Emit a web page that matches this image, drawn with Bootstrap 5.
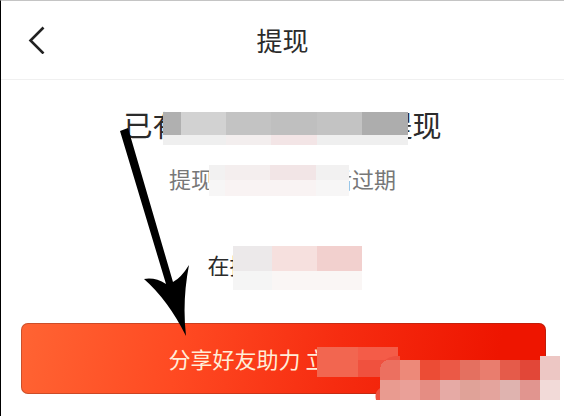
<!DOCTYPE html>
<html lang="zh-CN">
<head>
<meta charset="utf-8">
<meta name="viewport" content="width=device-width, initial-scale=1">
<title>提现</title>
<link href="https://cdn.jsdelivr.net/npm/bootstrap@5.3.0/dist/css/bootstrap.min.css" rel="stylesheet">
<style>
body { font-family: "Noto Sans CJK SC", sans-serif; color: #2b2b2b; background: #fff; }
.screen { border-left: 1px solid #000; border-top: 1px solid #c4c4c4; min-height: 100vh; overflow: hidden; }
.topbar { height: 79px; border-bottom: 1px solid #f0f0f0; padding: 0 26px; }
.side { width: 22px; }
.title { font-size: 26px; line-height: 32px; font-weight: 400; }
.line { display: flex; justify-content: center; white-space: nowrap; }
.line svg { position: relative; flex: none; }
.headline { font-size: 29px; line-height: 34px; font-weight: 400; margin-top: 27px; }
.headline svg { margin: 5px -24px 0 -19px; }
.expiry { font-size: 22px; line-height: 32px; color: #777; margin-top: 17px; }
.expiry svg { margin: 3px -19px 0 -4px; }
.waiting { font-size: 22px; line-height: 36px; margin-top: 50px; padding-left: 4px; }
.waiting svg { margin-left: -19px; }
.action { margin: 33px 18px 0 20px; }
.share { --bs-btn-border-width: 0; height: 71px; border-radius: 7px; font-size: 22px; line-height: 32px; color: #ffedd9;
  background: linear-gradient(100deg, #ff6433, #ff4a22 30%, #f62c10 60%, #ee1500 90%);
  box-shadow: inset 0 0 0 1px rgba(110, 45, 30, .35); }
.share:hover { color: #ffedd9; background: linear-gradient(100deg, #ff6433, #ee1500); }
.share span { padding-bottom: 2px; }
.share svg { margin: 6px 0 0 -10px; }
.censor { right: -14px; bottom: -6px; }
.pointer { left: 119px; top: 125px; }
</style>
<script src="https://cdn.jsdelivr.net/npm/bootstrap@5.3.0/dist/js/bootstrap.bundle.min.js"></script>
</head>
<body>
<div class="screen position-relative">
  <header class="topbar d-flex align-items-center justify-content-between">
    <button type="button" class="btn p-0 border-0 side d-flex" aria-label="返回">
      <svg width="20" height="28" viewBox="0 0 20 28" fill="none" stroke="#222" stroke-width="2.6"><path d="M16.500 1.500L3.500 14.500L16.500 27.500"/></svg>
    </button>
    <h1 class="title m-0">提现</h1>
    <span class="side"></span>
  </header>
  <main>
    <h2 class="line headline mb-0">
      <span>已有</span>
      <svg width="245" height="33" shape-rendering="crispEdges" aria-hidden="true">
        <path fill="#c3c3c3" d="M0 0h245v23H0z"/><path fill="#b0b0b0" d="M0 0h18v23H0z"/><path fill="#d2d2d2" d="M18 0h45v23H18z"/><path fill="#bfbfbf" d="M108 0h46v23h-46z"/><path fill="#adadad" d="M199 0h46v23h-46z"/>
        <path fill="#efefef" d="M0 23h245v10H0z"/><path fill="#f3eeee" d="M63 23h45v10H63z"/><path fill="#f3e5e6" d="M108 23h46v10h-46z"/>
      </svg>
      <span>提现</span>
    </h2>
    <p class="line expiry mb-0">
      <span>提现</span>
      <svg width="140" height="31" shape-rendering="crispEdges" aria-hidden="true">
        <path fill="#f2f1f1" d="M0 0h140v15H0z"/><path fill="#f4eeee" d="M16 0h45v15H16z"/><path fill="#f2e5e6" d="M61 0h46v15H61z"/>
        <path fill="#f7f6f6" d="M0 15h140v16H0z"/><path fill="#f9f3f3" d="M16 15h91v16H16z"/>
      </svg>
      <span>后过期</span>
    </p>
    <p class="line waiting mb-0">
      <span>在接</span>
      <svg width="129" height="44" shape-rendering="crispEdges" aria-hidden="true">
        <path fill="#ece9ea" d="M0 0h39v25H0z"/><path fill="#f6e0de" d="M39 0h45v25H39z"/><path fill="#f2d0ce" d="M84 0h45v25H84z"/>
        <path fill="#f5f5f5" d="M0 25h39v19H0z"/><path fill="#faf6f5" d="M39 25h90v19H39z"/>
      </svg>
    </p>
    <div class="action position-relative">
      <button type="button" class="btn share w-100 p-0 d-flex align-items-center justify-content-center">
        <span>分享好友助力 立</span>
        <svg width="81" height="30" shape-rendering="crispEdges" aria-hidden="true">
          <path fill="#f26650" d="M0 0h81v30H0z"/><path fill="#f45c48" d="M41 0h40v13H41z"/><path fill="#f0513e" d="M41 13h40v17H41z"/>
        </svg>
      </button>
      <svg class="censor position-absolute" width="185" height="44" aria-hidden="true">
        <path fill="#ee5140" d="M5 9V32Q-1 36 1 44H5zM5 13Q7 2 20 0H25V4H5z"/>
        <g shape-rendering="crispEdges">
          <path fill="#ec7060" d="M5 12Q7 4 14 4H25V24H5z"/><path fill="#ed8979" d="M25 4h20v20H25z"/><path fill="#ec4c35" d="M45 4h20v20H45z"/><path fill="#eb5946" d="M65 4h20v20H65z"/><path fill="#e47060" d="M85 4h20v20H85z"/><path fill="#e97d6e" d="M105 4h20v20h-20z"/><path fill="#e55b4a" d="M125 4h20v20h-20z"/><path fill="#e24738" d="M145 4h20v20h-20z"/><path fill="#edc7c4" d="M165 0h20v24h-20z"/>
          <path fill="#e99b90" d="M5 24h20v20H5z"/><path fill="#eaa098" d="M25 24h20v20H25z"/><path fill="#e58d83" d="M45 24h20v20H45z"/><path fill="#e6aaa5" d="M65 24h20v20H65z"/><path fill="#e0a298" d="M85 24h20v20H85z"/><path fill="#e4a49d" d="M105 24h20v20h-20z"/><path fill="#dfb3af" d="M125 24h20v20h-20z"/><path fill="#e1958f" d="M145 24h20v20h-20z"/><path fill="#f2dad8" d="M165 24h20v20h-20z"/>
        </g>
      </svg>
    </div>
  </main>
  <svg class="pointer position-absolute" width="72" height="212" fill="#000" aria-hidden="true">
    <path d="M0 5L8 2L53 156Q61 152 69 139Q62 175 66 210Q48 174 24 153Q35 151 46 158z"/>
  </svg>
</div>
</body>
</html>
